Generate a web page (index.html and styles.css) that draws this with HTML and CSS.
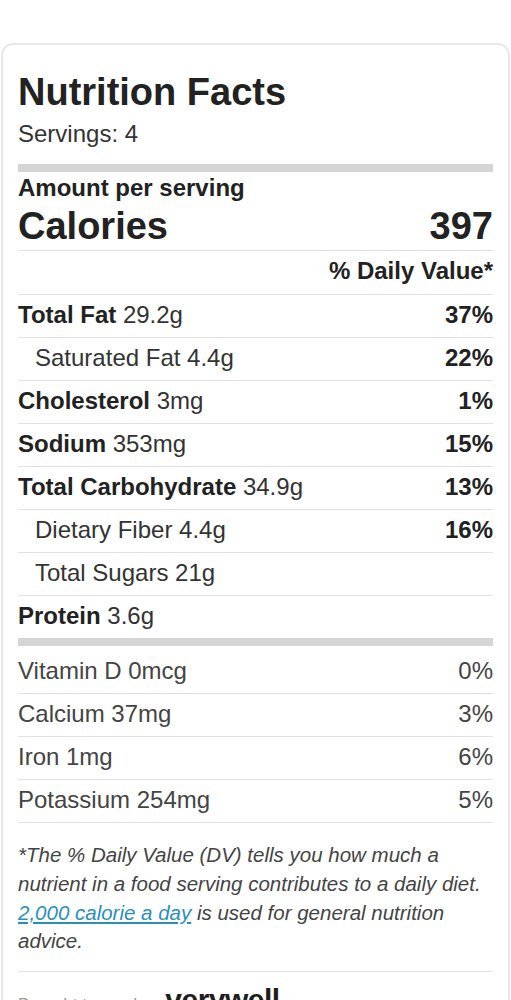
FILE: index.html
```html
<!DOCTYPE html>
<html lang="en">
<head>
<meta charset="utf-8">
<title>Nutrition Facts</title>
<link rel="stylesheet" href="styles.css">
</head>
<body>
<section class="card">
  <h1 class="title">Nutrition Facts</h1>
  <p class="servings">Servings: 4</p>
  <div class="bar"></div>
  <p class="amount">Amount per serving</p>
  <div class="calories"><span>Calories</span><span>397</span></div>
  <div class="row row-dv"><span></span><span class="b">% Daily Value*</span></div>
  <div class="row"><span><span class="b">Total Fat</span> 29.2g</span><span class="b">37%</span></div>
  <div class="row"><span class="sub">Saturated Fat 4.4g</span><span class="b">22%</span></div>
  <div class="row"><span><span class="b">Cholesterol</span> 3mg</span><span class="b">1%</span></div>
  <div class="row"><span><span class="b">Sodium</span> 353mg</span><span class="b">15%</span></div>
  <div class="row"><span><span class="b">Total Carbohydrate</span> 34.9g</span><span class="b">13%</span></div>
  <div class="row"><span class="sub">Dietary Fiber 4.4g</span><span class="b">16%</span></div>
  <div class="row"><span class="sub">Total Sugars 21g</span><span></span></div>
  <div class="row"><span><span class="b">Protein</span> 3.6g</span><span></span></div>
  <div class="bar"></div>
  <div class="row vit vit-first"><span>Vitamin D 0mcg</span><span>0%</span></div>
  <div class="row vit"><span>Calcium 37mg</span><span>3%</span></div>
  <div class="row vit"><span>Iron 1mg</span><span>6%</span></div>
  <div class="row vit"><span>Potassium 254mg</span><span>5%</span></div>
  <p class="note">*The % Daily Value (DV) tells you how much a nutrient in a food serving contributes to a daily diet. <a href="#">2,000 calorie a day</a> is used for general nutrition advice.</p>
  <div class="footer"><span class="brought">Brought to you by</span><span class="logo">verywell</span></div>
</section>
</body>
</html>
```
FILE: styles.css
```css
html, body {
  margin: 0;
  padding: 0;
  background: #ffffff;
}
body {
  font-family: "Liberation Sans", Arial, Helvetica, sans-serif;
  color: #333333;
}
.card {
  margin: 43px 1px 0 1px;
  border: 2px solid #e8e8e8;
  border-radius: 12px;
  padding: 25px 15px 40px 15px;
}
.title {
  margin: 0;
  font-size: 38px;
  line-height: 45.6px;
  font-weight: 700;
  color: #222222;
}
.servings {
  margin: 4.4px 0 0 0;
  font-size: 24px;
  line-height: 28.8px;
  color: #333333;
}
.bar {
  height: 8px;
  background: #d5d5d5;
}
.servings + .bar {
  margin-top: 15.2px;
}
.amount {
  margin: 2.3px 0 0 0;
  font-size: 24px;
  line-height: 28.8px;
  font-weight: 700;
  color: #222222;
}
.calories {
  display: flex;
  justify-content: space-between;
  align-items: baseline;
  font-size: 38px;
  line-height: 45.6px;
  font-weight: 700;
  color: #222222;
  margin: 1px 0 0 0;
}
.row {
  display: flex;
  justify-content: space-between;
  align-items: baseline;
  border-top: 1px solid #e2e2e2;
  padding: 6.5px 0 6.7px 0;
  font-size: 24px;
  line-height: 28.8px;
  color: #333333;
}
.row-dv {
  padding-bottom: 7.7px;
}
.b {
  font-weight: 700;
  color: #222222;
}
.sub {
  padding-left: 17px;
}
.vit {
  color: #444444;
}
.vit-first {
  border-top: none;
  padding-top: 11.7px;
}
.note {
  margin: 0;
  border-top: 1px solid #e2e2e2;
  padding: 18.5px 0 15px 0;
  font-size: 20.5px;
  line-height: 28.7px;
  font-style: italic;
  color: #444444;
}
.note a {
  color: #2a8fbd;
  text-decoration: underline;
}
.footer {
  display: flex;
  align-items: baseline;
  gap: 14px;
  border-top: 1px solid #e2e2e2;
  padding-top: 10px;
}
.brought {
  font-size: 17px;
  line-height: 20px;
  color: #9a9a9a;
}
.logo {
  font-size: 30px;
  line-height: 36px;
  font-weight: 900;
  color: #1e1e1e;
  letter-spacing: -0.5px;
}
```
